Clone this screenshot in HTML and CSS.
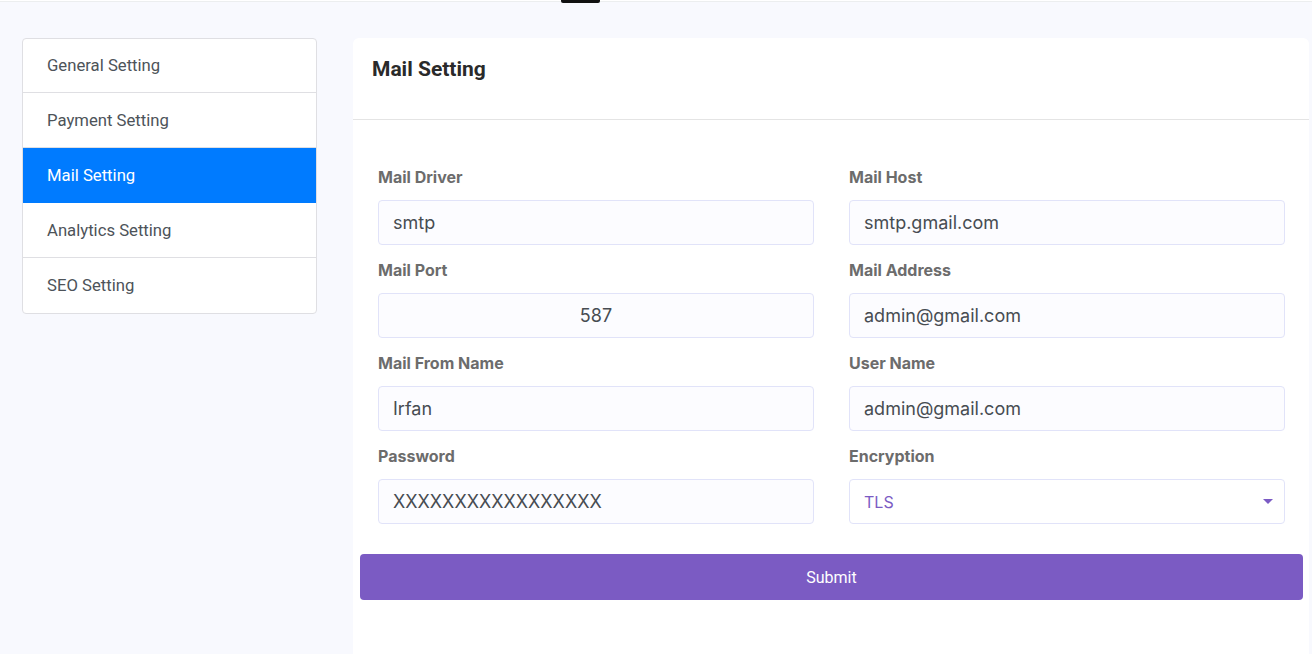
FILE: index.html
```html
<!DOCTYPE html>
<html lang="en">
<head>
<meta charset="utf-8">
<title>Mail Setting</title>
<link rel="stylesheet" href="styles.css">
</head>
<body>
<div class="topbar"><span class="logo-tail"></span></div>
<div class="page">
  <nav class="side-list">
    <a class="side-item" href="#">General Setting</a>
    <a class="side-item" href="#">Payment Setting</a>
    <a class="side-item active" href="#">Mail Setting</a>
    <a class="side-item" href="#">Analytics Setting</a>
    <a class="side-item" href="#">SEO Setting</a>
  </nav>
  <section class="card">
    <div class="card-header"><h2 class="card-title">Mail Setting</h2></div>
    <form class="card-body">
      <div class="grid">
        <div class="group">
          <label class="lbl">Mail Driver</label>
          <input class="ctl" type="text" value="smtp">
        </div>
        <div class="group">
          <label class="lbl">Mail Host</label>
          <input class="ctl" type="text" value="smtp.gmail.com">
        </div>
        <div class="group">
          <label class="lbl">Mail Port</label>
          <input class="ctl center" type="text" value="587">
        </div>
        <div class="group">
          <label class="lbl">Mail Address</label>
          <input class="ctl" type="text" value="admin@gmail.com">
        </div>
        <div class="group">
          <label class="lbl">Mail From Name</label>
          <input class="ctl" type="text" value="Irfan">
        </div>
        <div class="group">
          <label class="lbl">User Name</label>
          <input class="ctl" type="text" value="admin@gmail.com">
        </div>
        <div class="group">
          <label class="lbl">Password</label>
          <input class="ctl" type="text" value="XXXXXXXXXXXXXXXXX">
        </div>
        <div class="group">
          <label class="lbl">Encryption</label>
          <div class="select-wrap">
            <select class="ctl sel"><option>TLS</option><option>SSL</option></select>
            <span class="caret"></span>
          </div>
        </div>
      </div>
      <button class="submit" type="button">Submit</button>
    </form>
  </section>
</div>
</body>
</html>
```
FILE: styles.css
```css
* { box-sizing: border-box; }
html, body { margin: 0; padding: 0; }
body {
  background: #f8f9fe;
  font-family: Roboto, "Liberation Sans", sans-serif;
  overflow: hidden;
}
.topbar {
  position: relative;
  height: 2px;
  background: #ffffff;
  border-bottom: 1px solid #eceeef;
}
.logo-tail {
  position: absolute;
  left: 561px;
  top: 0;
  width: 39px;
  height: 3px;
  background: #111;
  border-radius: 0 0 2px 2px;
}
.page {
  display: flex;
  align-items: flex-start;
  gap: 36px;
  padding: 36px 3px 0 22px;
}
.side-list {
  width: 295px;
  flex: none;
  display: flex;
  flex-direction: column;
  background: #fff;
  border: 1px solid #dfdfe3;
  border-radius: 4px;
  overflow: hidden;
}
.side-item {
  display: flex;
  align-items: center;
  height: 55px;
  padding: 0 24px;
  font-size: 16.7px;
  color: #4d5359;
  text-decoration: none;
  border-bottom: 1px solid #dfdfe3;
}
.side-item:first-child { height: 54px; }
.side-item:last-child { border-bottom: none; }
.side-item.active {
  background: #007bff;
  color: #fff;
  border-bottom-color: #007bff;
}
.card {
  flex: 1;
  background: #fff;
  border-radius: 6px 6px 0 0;
  min-height: 640px;
}
.card-header {
  height: 82px;
  padding: 19px 19px 0;
  border-bottom: 1px solid #e4e4e4;
}
.card-title {
  margin: 0;
  font-size: 21px;
  line-height: 24px;
  font-weight: 700;
  color: #2a2a2a;
}
.card-body {
  padding: 45px 6px 0 7px;
  margin: 0;
}
.grid {
  display: grid;
  grid-template-columns: 1fr 1fr;
  column-gap: 35px;
  padding: 0 18px;
}
.group {
  display: flex;
  flex-direction: column;
  margin-bottom: 13px;
}
.lbl {
  font-family: Inter, "Liberation Sans", sans-serif;
  font-size: 16px;
  line-height: 24px;
  font-weight: 700;
  color: #6c6c6c;
  margin-bottom: 11px;
}
.ctl {
  height: 45px;
  width: 100%;
  padding: 0 14px;
  border: 1px solid #e1e3f9;
  border-radius: 4px;
  background: #fcfcff;
  font-family: Inter, "Liberation Sans", sans-serif;
  font-size: 18px;
  color: #474c52;
  outline: none;
}
.ctl.center { text-align: center; }
.select-wrap { position: relative; }
.sel {
  appearance: none;
  -webkit-appearance: none;
  background: #fff;
  color: #7b5bc4;
  font-size: 16px;
}
.caret {
  position: absolute;
  right: 12px;
  top: 20px;
  width: 0;
  height: 0;
  border-left: 5px solid transparent;
  border-right: 5px solid transparent;
  border-top: 5px solid #7b5bc4;
}
.submit {
  display: block;
  width: 100%;
  height: 46px;
  margin-top: 17px;
  border: none;
  border-radius: 4px;
  background: #7b5bc3;
  color: #fff;
  font-family: Roboto, "Liberation Sans", sans-serif;
  font-size: 16px;
}
```
